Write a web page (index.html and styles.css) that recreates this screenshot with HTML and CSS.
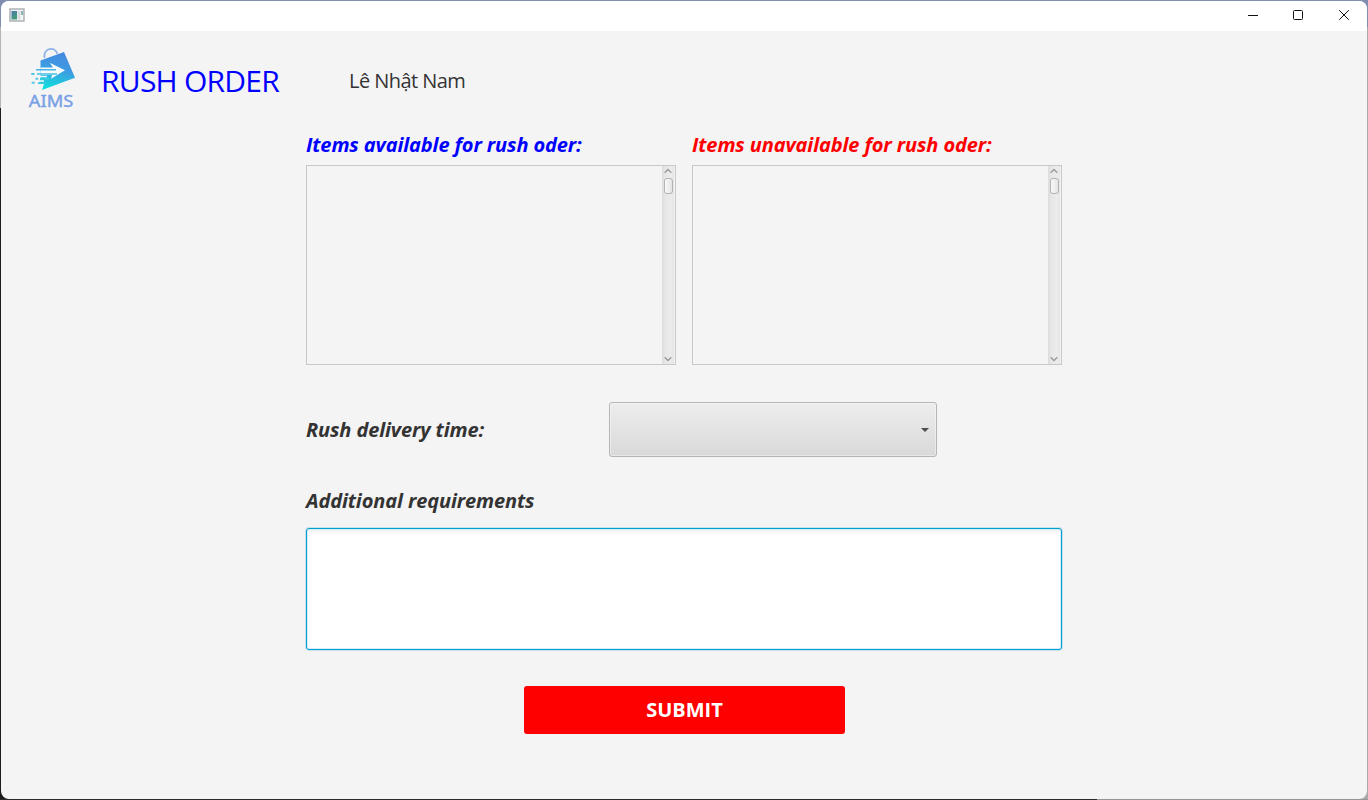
FILE: index.html
```
<!DOCTYPE html>
<html lang="en">
<head>
<meta charset="utf-8">
<title>Rush Order</title>
<link rel="stylesheet" href="styles.css">
</head>
<body>
<div class="window">
  <div class="titlebar">
    <svg class="app-icon" width="16" height="14" viewBox="0 0 16 14">
      <defs><linearGradient id="pane" x2="0.5" y2="1"><stop stop-color="#4a78ae"/><stop offset="1" stop-color="#479c75"/></linearGradient></defs>
      <rect x="1" y="1" width="14" height="12" fill="#f5f5f5" stroke="#a9adb1" stroke-width="1.400"/>
      <rect x="2.500" y="3" width="5.500" height="8.500" fill="url(#pane)"/>
      <rect x="8.500" y="3" width="3" height="8.500" fill="#d8dce1"/>
      <rect x="12" y="3" width="2.200" height="4" fill="#8fb5b0"/>
    </svg>
    <svg class="controls" width="110" height="14" viewBox="0 0 110 14" fill="none" stroke="#111">
      <path d="M3 7.500h10"/>
      <rect x="48.500" y="2.500" width="9" height="9" rx="1"/>
      <path d="M94.200 2.200l9.600 9.600M103.800 2.200l-9.600 9.600"/>
    </svg>
  </div>
  <header class="header">
    <svg class="logo" width="50" height="64" viewBox="27 46 50 64">
      <defs><linearGradient id="bag" x1=".65" y1="0" x2=".4" y2="1"><stop stop-color="#4788df"/><stop offset=".45" stop-color="#3d9be2"/><stop offset="1" stop-color="#12dfdc"/></linearGradient></defs>
      <path d="M44.500 58C43.500 52 47 48.900 51 48.900c3 0 5.300 2 6.500 5" fill="none" stroke="#8fb1ea" stroke-width="1.600"/>
      <path d="M40.500 60.500L64 52l11 25.700L42 90l2-6h-5l1.500-7z" fill="url(#bag)"/>
      <path d="M49.700 62.800L65 70.300 51 78.700l1-3.700H40.500V67.500H53z" fill="#f6fafd"/>
      <path d="M36 69.700h20" stroke="#48b3e4" stroke-width="1.600"/>
      <path d="M37 74h20" stroke="#42c1e4" stroke-width="1.600"/>
      <path d="M37 76.500h10M37 81h7" stroke="#f3f9fb" stroke-width="1.400"/>
      <path d="M40 78.800h9M38 83.200h8" stroke="#35cbe0" stroke-width="1.700"/>
      <path d="M31.200 74h3.300M35.500 78.800h2.700M31.700 82.800h3" stroke="#55c8e8" stroke-width="2"/>
      <text x="28.800" y="106.500" textLength="44.500" lengthAdjust="spacingAndGlyphs" class="logo-text">AIMS</text>
    </svg>
    <h1 class="title">RUSH ORDER</h1>
    <span class="customer">Lê Nhật Nam</span>
  </header>
  <main class="form">
    <div class="lists">
      <section class="list">
        <h2 class="label available">Items available for rush oder:</h2>
        <div class="pane"><div class="scrollbar">
          <svg width="8" height="6" viewBox="0 0 8 6"><path d="M.7 4.700L4 1.500l3.300 3.200" fill="none" stroke="#999" stroke-width="1.300"/></svg>
          <div class="thumb"></div>
          <svg class="down" width="8" height="6" viewBox="0 0 8 6"><path d="M.7 1.300L4 4.500l3.300-3.200" fill="none" stroke="#999" stroke-width="1.300"/></svg>
        </div></div>
      </section>
      <section class="list">
        <h2 class="label unavailable">Items unavailable for rush oder:</h2>
        <div class="pane"><div class="scrollbar">
          <svg width="8" height="6" viewBox="0 0 8 6"><path d="M.7 4.700L4 1.500l3.300 3.200" fill="none" stroke="#999" stroke-width="1.300"/></svg>
          <div class="thumb"></div>
          <svg class="down" width="8" height="6" viewBox="0 0 8 6"><path d="M.7 1.300L4 4.500l3.300-3.200" fill="none" stroke="#999" stroke-width="1.300"/></svg>
        </div></div>
      </section>
    </div>
    <div class="delivery">
      <h2 class="label time">Rush delivery time:</h2>
      <div class="combo"><svg width="8" height="4" viewBox="0 0 8 4"><path d="M0 0h8L4 4z" fill="#4d4d4d"/></svg></div>
    </div>
    <h2 class="label extra">Additional requirements</h2>
    <div class="textarea"></div>
    <button class="submit">SUBMIT</button>
  </main>
</div>
</body>
</html>
```
FILE: styles.css
```
* { box-sizing: border-box; }
body {
  margin: 0;
  height: 800px;
  padding: 1px;
  overflow: hidden;
  background: linear-gradient(90deg, #2b2b2d 1097px, #969696 1097px) 0 799px / 1368px 1px no-repeat,
    linear-gradient(#7f8db0 27px, #b5b5b5 27px, #b5b5b5 108px, #1c1c1e 108px) 0 0 / 8px 800px no-repeat,
    linear-gradient(#7f8db0 27px, #a9a9a9 27px) 1360px 0 / 8px 800px no-repeat,
    #7f8db0;
  font-family: "Open Sans", "Noto Sans", sans-serif;
  color: #333;
}
.window { height: 798px; border-radius: 8px; overflow: hidden; background: #f4f4f4; }
.titlebar { height: 30px; background: #fff; display: flex; justify-content: space-between; padding: 7px 12px 0 8px; }
.header { height: 97px; display: flex; align-items: flex-start; }
.logo { margin: 15px 0 0 26px; flex: none; }
.logo-text { font: 16.3px "Noto Sans", sans-serif; fill: #76a0e5; stroke: #76a0e5; stroke-width: .35px; }
.title { margin: 30px 0 0 24px; width: 248px; font-size: 30px; line-height: 40px; font-weight: 400; color: #00f; white-space: nowrap; letter-spacing: -.75px; }
.customer { margin-top: 36px; font-size: 20px; line-height: 28px; white-space: nowrap; letter-spacing: -.55px; }
.form { width: 756px; margin-left: 305px; display: flex; flex-direction: column; }
.lists { display: flex; gap: 16px; }
.list { width: 370px; }
.label { margin: 0; font-size: 20px; line-height: 28px; font-weight: 700; font-style: italic; white-space: nowrap; letter-spacing: -.12px; }
.available { color: #00f; }
.unavailable { color: #f00; }
.list .label { height: 37px; padding-top: 3px; }
.pane { height: 200px; border: 1px solid #c8c8c8; display: flex; justify-content: flex-end; padding-right: 1px; }
.scrollbar { width: 12px; padding: 2px 0 2px; display: flex; flex-direction: column; align-items: center; background: linear-gradient(90deg, #dcdcdc, #e6e6e6 3px, #ececec 9px, #e4e4e4); }
.thumb { width: 9px; height: 16px; margin-top: 4px; border: 1px solid #b3b3b3; border-radius: 3px; background: linear-gradient(90deg, #f9f9f9, #e4e4e4); }
.down { margin-top: auto; }
.delivery { margin-top: 37px; height: 55px; display: flex; align-items: center; }
.time { width: 303px; }
.combo { width: 328px; height: 55px; border: 1px solid #b5b5b5; border-radius: 3px; background: linear-gradient(#ededed, #d9d9d9); box-shadow: inset 0 0 0 1px rgba(255,255,255,.4); display: flex; align-items: center; justify-content: flex-end; padding-right: 7px; }
.extra { margin-top: 30px; height: 41px; }
.textarea { height: 122px; border: 1px solid #039ed3; border-radius: 3px; background: #fff; box-shadow: 0 0 0 1px #c8e3ec, inset 0 0 0 1px #d4eef5, inset 0 3px 2px #eef3f4; }
.submit { align-self: center; width: 321px; height: 48px; margin: 36px 0 0 1px; padding: 0; border: 0; border-radius: 3px; background: #f00; color: #fff; font: 700 20px/48px "Open Sans", sans-serif; }
```
